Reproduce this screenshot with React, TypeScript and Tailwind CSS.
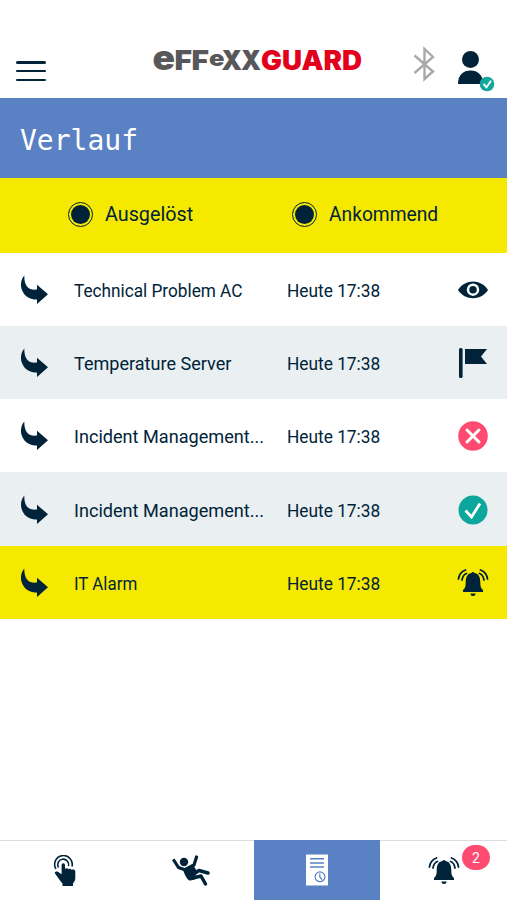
import type { ReactNode } from "react";

type Entry = {
    title: string;
    time: string;
    background: string;
    stretch: string;
    icon: ReactNode;
};

function Logo() {
    return (
        <svg
            width="212"
            height="36"
            viewBox="0 -6 212 36"
            fontFamily="Inter, sans-serif"
            fontWeight="900"
            fontSize="26.5"
            className="block overflow-visible"
        >
            <g fill="#58585a">
                <text x="0.5" y="23.5" fontSize="34" textLength="22.5" lengthAdjust="spacingAndGlyphs">e</text>
                <text x="22.5" y="23.5" textLength="17.5" lengthAdjust="spacingAndGlyphs">F</text>
                <text x="39.5" y="23.5" textLength="17.5" lengthAdjust="spacingAndGlyphs">F</text>
                <text x="69.5" y="23.5" textLength="20.5" lengthAdjust="spacingAndGlyphs">X</text>
                <text x="89" y="23.5" textLength="20" lengthAdjust="spacingAndGlyphs">X</text>
            </g>
            <circle cx="64" cy="13.5" r="9.5" fill="white" />
            <text x="57" y="20" fontSize="22" fill="#58585a" textLength="15.5" lengthAdjust="spacingAndGlyphs">e</text>
            <text x="109" y="23.5" fill="#e3001b" textLength="101" lengthAdjust="spacingAndGlyphs">GUARD</text>
        </svg>
    );
}

function BluetoothIcon() {
    return (
        <svg width="22" height="36" viewBox="0 0 22 36" fill="none" stroke="#a9a9a9" strokeWidth="2.400">
            <path d="M1.500 9.500 20 25.500 11.500 33V3l8.500 8L1.500 27" />
        </svg>
    );
}

function UserIcon() {
    return (
        <svg width="38" height="42" viewBox="0 0 38 42">
            <circle cx="13.5" cy="9.5" r="8.5" fill="#00233a" />
            <path d="M1 34C1 25 6 20.5 13.5 20.5S26 25 26 34Z" fill="#00233a" />
            <circle cx="30" cy="34" r="7.3" fill="#12a79d" />
            <path d="m26.5 34 3 3.300 4.500-6.500" fill="none" stroke="white" strokeWidth="1.900" />
        </svg>
    );
}

function ArrowIcon() {
    return (
        <svg width="28" height="30" viewBox="0 0 28 30" fill="currentColor">
            <path d="M4.300 .5C.5 5 .2 11 2.200 15.500 4.500 21.500 10 24.600 17 24.600V29L28 19.300 17 9.700v4.800C9.500 15.500 4 12 4.300 .5Z" />
        </svg>
    );
}

function EyeIcon() {
    return (
        <svg width="32" height="20" viewBox="0 0 32 20">
            <path d="M1 10C8-1.500 24-1.500 31 10 24 21 8 21 1 10Z" fill="currentColor" />
            <circle cx="16" cy="9.700" r="5" fill="none" stroke="white" strokeWidth="2.500" />
        </svg>
    );
}

function FlagIcon() {
    return (
        <svg width="32" height="32" viewBox="0 0 32 32" fill="currentColor">
            <rect x="2" y="1" width="3.600" height="30" rx="1.500" />
            <path d="M8 2h22l-6 7.500L30 17H8Z" />
        </svg>
    );
}

function CrossIcon() {
    return (
        <svg width="32" height="32" viewBox="0 0 32 32">
            <circle cx="16" cy="16" r="14.800" fill="#ff4b72" />
            <path d="m10 10 12 12m0-12L10 22" stroke="white" strokeWidth="3" strokeLinecap="round" />
        </svg>
    );
}

function CheckIcon() {
    return (
        <svg width="32" height="32" viewBox="0 0 32 32">
            <circle cx="16" cy="16" r="14.500" fill="#0ca69c" />
            <path d="m8.500 16.500 6 6.500L23 9.500" fill="none" stroke="white" strokeWidth="2.800" />
        </svg>
    );
}

function BellIcon() {
    return (
        <svg width="32" height="30" viewBox="0 0 32 30" fill="currentColor">
            <path d="M14.500 5a1.600 1.600 0 0 1 3 0c4.500.8 5.800 4.500 5.800 9.500 0 4 .7 6 2.700 7.500V24H6v-2C8 20.500 8.700 18.500 8.700 14.500c0-5 1.300-8.700 5.800-9.500Z" />
            <path d="M13.500 25.500h5a2.500 2.500 0 0 1-5 0Z" />
            <g fill="none" stroke="currentColor" strokeWidth="1.800" strokeLinecap="round">
                <path d="M1.500 11C2 6.500 4.500 3.500 8.500 2M5 12C5.500 8.500 7 6.500 9.500 5.500" />
                <path d="M30.500 11C30 6.500 27.500 3.500 23.500 2M27 12C26.500 8.500 25 6.500 22.500 5.500" />
            </g>
        </svg>
    );
}

function TouchIcon() {
    return (
        <svg width="24" height="32" viewBox="0 0 24 32">
            <g fill="none" stroke="currentColor" strokeWidth="1.600">
                <path d="M3 14A8.800 8.800 0 1 1 19 11.500" />
                <path d="M5.500 12.500A5.500 5.500 0 1 1 15.500 11" />
            </g>
            <path d="M8.600 10a1.700 1.700 0 0 1 3.400 0v4c.6-1.200 3-1 3.300.3.800-1 3-.7 3.300.6 1-.8 3.700-.3 3.700 1.600v6.500c0 2.500-1.300 4-2.300 5.500V31H9.500v-2.500C6.500 25.500 4.500 21.500 2 18.500c-.7-1.600 1-2.700 2.900-1.700l3.700 2.500Z" fill="currentColor" />
        </svg>
    );
}

function FallIcon() {
    return (
        <svg width="40" height="32" viewBox="0 0 40 32" fill="none" stroke="currentColor" strokeLinecap="round" strokeLinejoin="round">
            <circle cx="13" cy="7" r="4.200" fill="currentColor" stroke="none" />
            <path d="m3 5.500 4.500 7 7 2.500 8.500-5L25.500 2" strokeWidth="3.200" />
            <path d="m13 14.500 8-4 3.500 5-1.500 8-4.500 1c-2.500-2-4-5-5.500-10Z" fill="currentColor" strokeWidth="2" />
            <path d="m22 19.500 6-4 9 2.500M20 23.500l10-2.500 4.500 8" strokeWidth="3.500" />
        </svg>
    );
}

function HistoryIcon() {
    return (
        <svg width="24" height="32" viewBox="0 0 24 32" fill="none">
            <path d="M1 .5h22v31H1Z" fill="white" />
            <path d="M5 4.800h14M5 9h14M5 13h14" stroke="#5981c4" strokeWidth="1.500" />
            <circle cx="15" cy="22.800" r="4.900" stroke="#5981c4" strokeWidth="1.200" />
            <path d="M14.800 19.500V23l2.500 2.500" stroke="#5981c4" strokeWidth="1.200" />
        </svg>
    );
}

function Radio({ label, stretch }: { label: string; stretch: string }) {
    return (
        <div className="flex w-56 shrink-0 items-center gap-3">
            <span className="flex size-[25px] items-center justify-center rounded-full border-[1.5px] border-[#00233a]">
                <span className="size-[19px] rounded-full bg-[#00233a]" />
            </span>
            <span className={`origin-left pb-px text-[21px] leading-7 whitespace-nowrap ${stretch}`}>{label}</span>
        </div>
    );
}

const entries: Entry[] = [
    { title: "Technical Problem AC", time: "Heute 17:38", background: "bg-white", stretch: "scale-x-[0.905]", icon: <EyeIcon /> },
    { title: "Temperature Server", time: "Heute 17:38", background: "bg-[#eaeff1]", stretch: "scale-x-[0.95]", icon: <FlagIcon /> },
    { title: "Incident Management...", time: "Heute 17:38", background: "bg-white", stretch: "scale-x-[0.953]", icon: <CrossIcon /> },
    { title: "Incident Management...", time: "Heute 17:38", background: "bg-[#eaeff1]", stretch: "scale-x-[0.953]", icon: <CheckIcon /> },
    { title: "IT Alarm", time: "Heute 17:38", background: "bg-[#f5e900]", stretch: "scale-x-[0.89]", icon: <BellIcon /> },
];

export default function App() {
    return (
        <div className="flex h-[900px] w-[507px] flex-col overflow-hidden bg-white font-['Roboto',sans-serif] text-[#00233a]">
            <header className="flex h-[98px] shrink-0 items-start pl-4">
                <button className="mt-[61px] flex h-5 w-[30px] flex-col justify-between" aria-label="Menu">
                    <span className="h-[2.5px] w-full rounded bg-current" />
                    <span className="h-[2.5px] w-full rounded bg-current" />
                    <span className="h-[2.5px] w-full rounded bg-current" />
                </button>
                <div className="mt-10 ml-[106px]">
                    <Logo />
                </div>
                <div className="mt-[46px] ml-[49px]">
                    <BluetoothIcon />
                </div>
                <div className="mt-[50px] ml-[22px]">
                    <UserIcon />
                </div>
            </header>
            <div className="flex h-20 shrink-0 items-center bg-[#5981c4] pt-[5px] pl-5">
                <h1 className="font-['DejaVu_Sans_Mono',monospace] text-[28px] leading-8 text-white">Verlauf</h1>
            </div>
            <div className="flex h-[74.5px] shrink-0 items-center bg-[#f5e900] pb-[2px] pl-[68px]">
                <Radio label="Ausgelöst" stretch="scale-x-[0.94]" />
                <Radio label="Ankommend" stretch="scale-x-[0.915]" />
            </div>
            <main className="flex-1">
                {entries.map((entry, index) => (
                    <div
                        key={index}
                        className={`grid h-[73.3px] grid-cols-[54px_213px_1fr_32px] items-center pt-px pr-[18px] pl-5 ${entry.background}`}
                    >
                        <ArrowIcon />
                        <span className={`origin-left pt-0.5 text-[19px] leading-7 whitespace-nowrap ${entry.stretch}`}>
                            {entry.title}
                        </span>
                        <span className="origin-left scale-x-[0.91] pt-0.5 text-[19px] leading-7 whitespace-nowrap">
                            {entry.time}
                        </span>
                        {entry.icon}
                    </div>
                ))}
            </main>
            <nav className="grid h-[60px] shrink-0 grid-cols-4 border-t border-[#dcdcdc]">
                <div className="flex items-center justify-center pl-[3px]">
                    <TouchIcon />
                </div>
                <div className="flex items-center justify-center pl-px">
                    <FallIcon />
                </div>
                <div className="-mt-px flex items-center justify-center bg-[#5981c4]">
                    <HistoryIcon />
                </div>
                <div className="relative flex items-center justify-center">
                    <BellIcon />
                    <span className="absolute top-1 right-[17px] flex h-[25px] w-7 items-center justify-center rounded-full bg-[#ff4b72] text-sm text-white">
                        2
                    </span>
                </div>
            </nav>
        </div>
    );
}
